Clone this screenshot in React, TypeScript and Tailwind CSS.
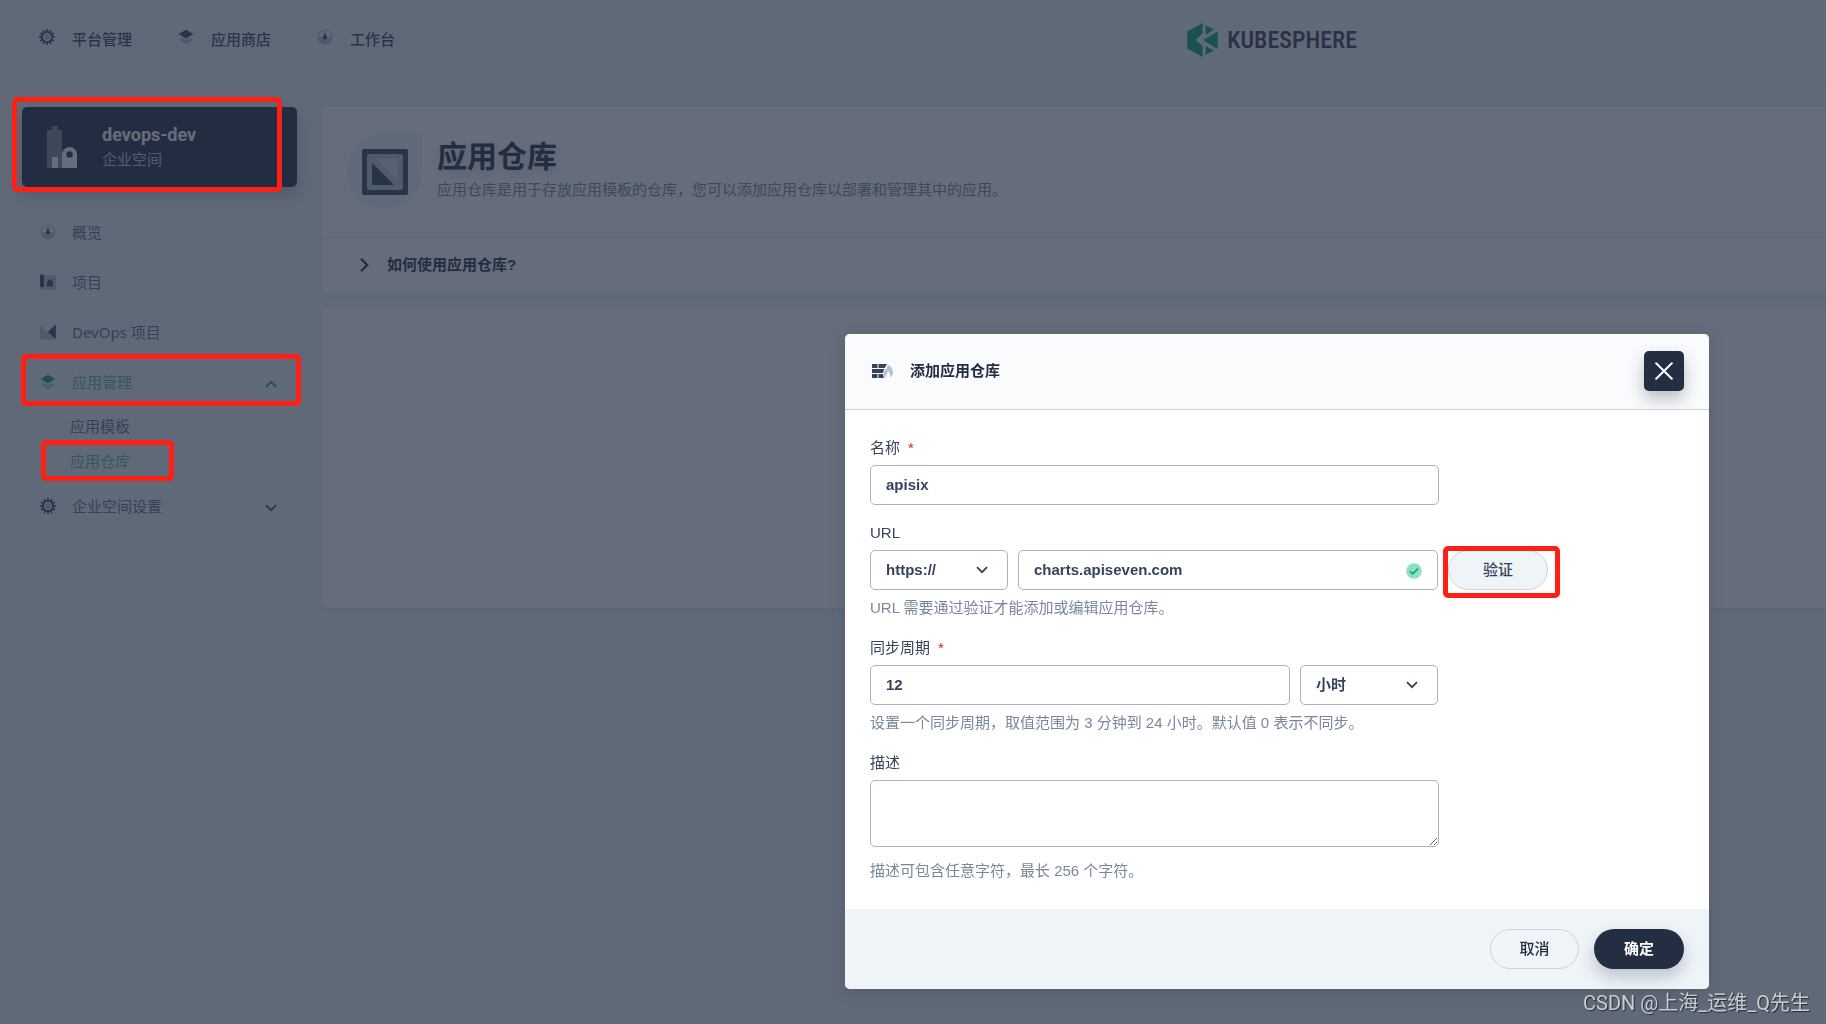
import React, { useState } from 'react';

type IconProps = { className?: string; dark?: string; light?: string };

const DARK = '#324558';
const LIGHT = '#b6c2cd';

function GearIcon({ className }: IconProps) {
  const teeth = Array.from({ length: 12 }, (_, i) => i * 30);
  return (
    <svg viewBox="0 0 16 16" className={className} aria-hidden="true">
      {teeth.map((a) => (
        <rect key={a} x="7.2" y="0" width="1.6" height="3" fill={DARK} transform={`rotate(${a} 8 8)`} />
      ))}
      <circle cx="8" cy="8" r="5.2" fill="#eff4f9" stroke={DARK} strokeWidth="1.8" />
      <circle cx="8" cy="8" r="3" fill={LIGHT} />
    </svg>
  );
}

function LayersIcon({ className, dark = DARK, light = LIGHT }: IconProps) {
  return (
    <svg viewBox="0 0 16 16" className={className} aria-hidden="true">
      <path d="M.6 11 4 8.9l4 2.2 4-2.2 3.4 2.1L8 15.2z" fill={light} />
      <path d="M8 .8 15.4 5 8 9.4.6 5z" fill={dark} />
    </svg>
  );
}

function DashboardIcon({ className }: IconProps) {
  return (
    <svg viewBox="0 0 16 16" className={className} aria-hidden="true">
      <circle cx="8" cy="8" r="6.900" fill="none" stroke={LIGHT} strokeWidth="1.4" />
      <path d="M.6 8h14.8A7.4 7.4 0 0 1 .6 8z" fill={LIGHT} />
      <path d="M8 3 9.8 8a1.9 1.9 0 1 1-3.6 0z" fill={DARK} />
    </svg>
  );
}

function ProjectIcon({ className }: IconProps) {
  return (
    <svg viewBox="0 0 16 16" className={className} aria-hidden="true">
      <path d="M4 1.6h12V16H1.4v-3H4z" fill={LIGHT} />
      <rect x="0" y="0.6" width="4" height="12.6" rx="1.4" fill={DARK} />
      <path d="M10 5l3 3v4.4H7V8z" fill={DARK} />
    </svg>
  );
}

function DevOpsIcon({ className }: IconProps) {
  return (
    <svg viewBox="0 0 16 16" className={className} aria-hidden="true">
      <path d="M0 1l15.6 14.6H0z" fill={LIGHT} />
      <path d="M15.8.6V15L7.6 8z" fill={DARK} />
    </svg>
  );
}

function EnterpriseIcon({ className }: IconProps) {
  return (
    <svg viewBox="0 0 30 42" className={className} aria-hidden="true">
      <path d="M5 0h6v4h4v38H0V4h5z" fill="#fff" opacity="0.42" />
      <rect x="5" y="31" width="6" height="11" fill="#fff" />
      <path d="M15 42V28.500a7.500 7.500 0 0 1 15 0V42z" fill="#fff" />
      <circle cx="22.500" cy="28.500" r="3.200" fill="#242e42" />
    </svg>
  );
}

function RepoIcon({ className }: IconProps) {
  return (
    <svg viewBox="0 0 46 46" className={className} aria-hidden="true">
      <rect x="0" y="0" width="46" height="46" rx="2" fill={DARK} />
      <rect x="5" y="5" width="36" height="36" rx="2" fill={LIGHT} />
      <path d="M15 10h21v21z" fill="#d5dee6" />
      <path d="M10 14v22h22z" fill={DARK} />
    </svg>
  );
}

function FirewallIcon({ className }: IconProps) {
  return (
    <svg viewBox="0 0 21 14" className={className} aria-hidden="true">
      <g fill={DARK}>
        <path d="M0 0h5.500v4H0zM6.500 0H15l-2.200 4H6.500z" />
        <path d="M0 5h12.300l-1.500 4H0z" />
        <path d="M0 10h5.500v4H0zM6.500 10h4.200L12 14H6.500z" />
      </g>
      <path d="M15.600.6c3.400 1.800 5.400 4.600 5.400 7.600 0 2.200-1 4.200-2.800 5.400.4-2.800-.4-5-2-6.600-.3 2-2.700 3.200-2 6.800-2-.9-3-2.500-2.800-4.500.3-3 4.500-4.300 4.200-8.700z" fill={LIGHT} />
    </svg>
  );
}

function Chevron({ className }: IconProps) {
  return (
    <svg viewBox="0 0 12 8" className={className} fill="none" stroke="currentColor" strokeWidth="1.8" aria-hidden="true">
      <path d="M1 1.200l5 5 5-5" />
    </svg>
  );
}

function Highlight({ className }: { className: string }) {
  return <span aria-hidden="true" className={`pointer-events-none absolute z-20 rounded-[5px] border-5 border-[#ff2015] ${className}`} />;
}

function Header() {
  const items = [
    { label: '平台管理', Icon: GearIcon },
    { label: '应用商店', Icon: LayersIcon },
    { label: '工作台', Icon: DashboardIcon },
  ];
  return (
    <header className="flex h-[81px] items-center border-b border-[#e3e9ef] pl-[39px]">
      <nav className="flex gap-[46px]">
        {items.map(({ label, Icon }) => (
          <a key={label} href="#" className="flex gap-[17px] text-[15px] leading-[22px] font-medium text-[#36435c]">
            <Icon className="size-4" />
            {label}
          </a>
        ))}
      </nav>
      <a href="#" className="mr-[469px] ml-auto flex items-center gap-[9px]">
        <svg viewBox="0 0 93 104" className="h-[34px] w-[31px]" fill="#00a971" aria-hidden="true">
          <path d="M0 26 47 0v32L26 51l21 20v33L0 78z" />
          <path d="M56 6l26 15-26 15zM93 26v54L48 52zM56 70l26 14-26 14z" />
        </svg>
        <span className="font-['Roboto_Condensed','Roboto',sans-serif] text-[24px] leading-8 font-medium text-[#3b3a4e]">KUBESPHERE</span>
      </a>
    </header>
  );
}

function NavItem({ label, icon, children }: { label: string; icon: React.ReactNode; children?: React.ReactNode }) {
  return (
    <a href="#" className="relative flex h-[50px] items-center gap-4 pl-[18px] text-[15px] leading-5">
      {icon}
      <span className="flex-1">{label}</span>
      {children}
    </a>
  );
}

function Sidebar() {
  return (
    <aside className="w-[275px] shrink-0 font-['Noto_Sans','Noto_Sans_CJK_SC',sans-serif]">
      <div className="relative flex h-20 items-center gap-[25px] rounded-[5px] bg-[#242e42] pl-[25px] text-white shadow-[0_8px_16px_0_rgba(36,46,66,0.28)]">
        <EnterpriseIcon className="h-[42px] w-[30px]" />
        <div>
          <div className="font-['Roboto',sans-serif] text-[18px] leading-6 font-bold">devops-dev</div>
          <div className="text-[15px] leading-6 text-[#c1c9d1]">企业空间</div>
        </div>
        <Highlight className="-top-[10px] right-[15px] -bottom-[5px] -left-[10px]" />
      </div>
      <nav className="mt-5 text-[#5f708a]">
        <NavItem label="概览" icon={<DashboardIcon className="size-4" />} />
        <NavItem label="项目" icon={<ProjectIcon className="size-4" />} />
        <NavItem label="DevOps 项目" icon={<DevOpsIcon className="size-4" />} />
        <div className="text-[#55bc8a]">
          <NavItem label="应用管理" icon={<LayersIcon className="size-4" dark="#00aa72" light="#90e0c5" />}>
            <Chevron className="mt-1 mr-5 h-2 w-3 rotate-180 text-[#00aa72]" />
            <Highlight className="-top-[3px] -right-1 bottom-px -left-px" />
          </NavItem>
        </div>
        <div className="py-[2px] pl-12 text-[15px]">
          <a href="#" className="flex h-[35px] items-center">应用模板</a>
          <a href="#" className="relative flex h-[35px] items-center text-[#55bc8a]">
            应用仓库
            <Highlight className="-top-1 right-[123px] -bottom-[2px] -left-[29px]" />
          </a>
        </div>
        <NavItem label="企业空间设置" icon={<GearIcon className="size-4" />}>
          <Chevron className="mt-1 mr-5 h-2 w-3 text-[#324558]" />
        </NavItem>
      </nav>
    </aside>
  );
}

function RepositoryPage() {
  return (
    <main className="flex min-w-0 flex-1 flex-col gap-[15px]">
      <section className="rounded-l-[5px] bg-white shadow-[0_4px_8px_0_rgba(36,46,66,0.04)]">
        <div className="flex h-[131px] border-b border-[#e3e9ef] pt-[27px] pl-[25px]">
          <div className="flex size-[75px] items-center justify-center rounded-full rounded-tr-none bg-[#eff4f9]">
            <RepoIcon className="size-[46px]" />
          </div>
          <div className="pt-[2px] pl-[15px]">
            <h1 className="text-[30px] leading-[42px] font-bold text-[#242e42] [text-shadow:0_4px_8px_rgba(36,46,66,0.2)]">应用仓库</h1>
            <p className="text-[15px] leading-6 text-[#79879c]">应用仓库是用于存放应用模板的仓库，您可以添加应用仓库以部署和管理其中的应用。</p>
          </div>
        </div>
        <button type="button" className="flex h-[55px] items-center gap-[15px] pb-[2px] pl-[35px] text-[15px] leading-5 font-bold text-[#242e42]">
          <Chevron className="h-[10px] w-[15px] -rotate-90" />
          如何使用应用仓库?
        </button>
      </section>
      <section className="h-[300px] rounded-l-[5px] bg-white shadow-[0_4px_8px_0_rgba(36,46,66,0.04)]" />
    </main>
  );
}

const FIELD = 'h-10 rounded-[5px] border border-[#abb4be] bg-white px-[15px] text-[15px] font-bold text-[#36435c] outline-none';

function Select({ id, label, value, options }: { id: string; label: string; value: string; options: string[] }) {
  const [current, setCurrent] = useState(value);
  return (
    <div className="relative w-[138px]">
      <select id={id} aria-label={label} value={current} onChange={(e) => setCurrent(e.target.value)} className={`${FIELD} w-full appearance-none`}>
        {options.map((o) => (
          <option key={o}>{o}</option>
        ))}
      </select>
      <Chevron className="pointer-events-none absolute top-4 right-5 h-2 w-3 text-[#324558]" />
    </div>
  );
}

function Label({ htmlFor, required, children }: { htmlFor: string; required?: boolean; children: React.ReactNode }) {
  return (
    <label htmlFor={htmlFor} className="mb-[7px] block pt-px text-[15px] leading-5 text-[#36435c]">
      {children}
      {required && <span className="ml-2 text-[#ca2621]">*</span>}
    </label>
  );
}

function AddRepositoryDialog() {
  return (
    <div className="fixed inset-0 z-10 flex items-start justify-end bg-[#242e42]/70 pt-[334px] pr-[117px]">
      <form
        role="dialog"
        aria-labelledby="dialog-title"
        onSubmit={(e) => e.preventDefault()}
        className="w-[864px] overflow-hidden rounded-[5px] bg-white font-['Liberation_Sans','Noto_Sans_CJK_SC',sans-serif] shadow-[0_4px_16px_0_rgba(36,46,66,0.2)]"
      >
        <div className="flex h-[76px] items-center border-b border-[#ccd3db] bg-[#f9fbfd] pr-[25px] pb-[2px] pl-[27px]">
          <FirewallIcon className="h-[14px] w-[21px]" />
          <h2 id="dialog-title" className="ml-[17px] flex-1 text-[15px] leading-5 font-bold text-[#242e42]">添加应用仓库</h2>
          <button type="button" aria-label="关闭" className="flex size-10 items-center justify-center rounded-[5px] bg-[#242e42] text-white shadow-[0_8px_16px_0_rgba(36,46,66,0.3)]">
            <svg viewBox="0 0 18 18" className="size-[18px]" fill="none" stroke="currentColor" strokeWidth="2" strokeLinecap="round" aria-hidden="true">
              <path d="M1.200 1.200l15.600 15.600M16.800 1.200L1.200 16.800" />
            </svg>
          </button>
        </div>

        <div className="px-[25px] pt-[27px] pb-[28px]">
          <div>
            <Label htmlFor="name" required>名称</Label>
            <input id="name" defaultValue="apisix" className={`${FIELD} block w-[569px] pb-[2px]`} />
          </div>
          <div className="mt-[17px]">
            <Label htmlFor="url">URL</Label>
            <div className="flex gap-[10px]">
              <Select id="scheme" label="协议" value="https://" options={['https://', 'http://', 's3://']} />
              <div className="relative w-[420px]">
                <input id="url" defaultValue="charts.apiseven.com" className={`${FIELD} w-full pb-[2px]`} />
                <svg viewBox="0 0 16 16" className="absolute top-[13px] right-4 size-4" aria-hidden="true">
                  <circle cx="8" cy="8" r="7.800" fill="#90e0c5" />
                  <path d="M3.800 8.200l2.900 2.700 5.500-5.500" fill="none" stroke="#00aa72" strokeWidth="1.500" />
                </svg>
              </div>
              <div className="relative">
                <button type="button" className="h-10 w-[100px] rounded-full border border-[#ccd3db] bg-[#eff4f9] text-[15px] font-medium text-[#36435c]">验证</button>
                <Highlight className="-top-1 -right-3 -bottom-2 -left-[5px]" />
              </div>
            </div>
            <p className="mt-2 text-[15px] leading-5 text-[#79879c]">URL 需要通过验证才能添加或编辑应用仓库。</p>
          </div>
          <div className="mt-[19px]">
            <Label htmlFor="period" required>同步周期</Label>
            <div className="flex gap-[10px]">
              <input id="period" defaultValue="12" className={`${FIELD} w-[420px] pb-[2px]`} />
              <Select id="unit" label="时间单位" value="小时" options={['小时', '分钟']} />
            </div>
            <p className="mt-2 text-[15px] leading-5 text-[#79879c]">设置一个同步周期，取值范围为 3 分钟到 24 小时。默认值 0 表示不同步。</p>
          </div>
          <div className="mt-[19px]">
            <Label htmlFor="description">描述</Label>
            <textarea id="description" className="block h-[67px] w-[569px] resize rounded-[5px] border border-[#abb4be] bg-white p-[10px] text-[15px] outline-none" />
            <p className="mt-[14px] text-[15px] leading-5 text-[#79879c]">描述可包含任意字符，最长 256 个字符。</p>
          </div>
        </div>

        <div className="flex h-20 items-center justify-end gap-[15px] bg-[#eff4f9] pr-[25px] text-[15px]">
          <button type="button" className="h-10 w-[89px] rounded-full border border-[#ccd3db] font-medium text-[#242e42]">取消</button>
          <button type="submit" className="h-10 w-[90px] rounded-full bg-[#242e42] font-bold text-white shadow-[0_8px_16px_0_rgba(36,46,66,0.25)]">确定</button>
        </div>
      </form>
    </div>
  );
}

export default function App() {
  return (
    <div className="min-h-screen overflow-hidden bg-[#eff4f9] font-['Liberation_Sans','Noto_Sans_CJK_SC',sans-serif]">
      <Header />
      <div className="flex gap-[25px] pt-[26px] pl-[22px]">
        <Sidebar />
        <RepositoryPage />
      </div>
      <AddRepositoryDialog />
      <div className="fixed right-4 bottom-2 z-30 font-['Roboto','Noto_Sans_CJK_SC',sans-serif] text-[20px] leading-[26px] text-[#c9ccd2] [text-shadow:1px_1px_1px_rgba(0,0,0,0.6)]">
        CSDN @上海_运维_Q先生
      </div>
    </div>
  );
}
